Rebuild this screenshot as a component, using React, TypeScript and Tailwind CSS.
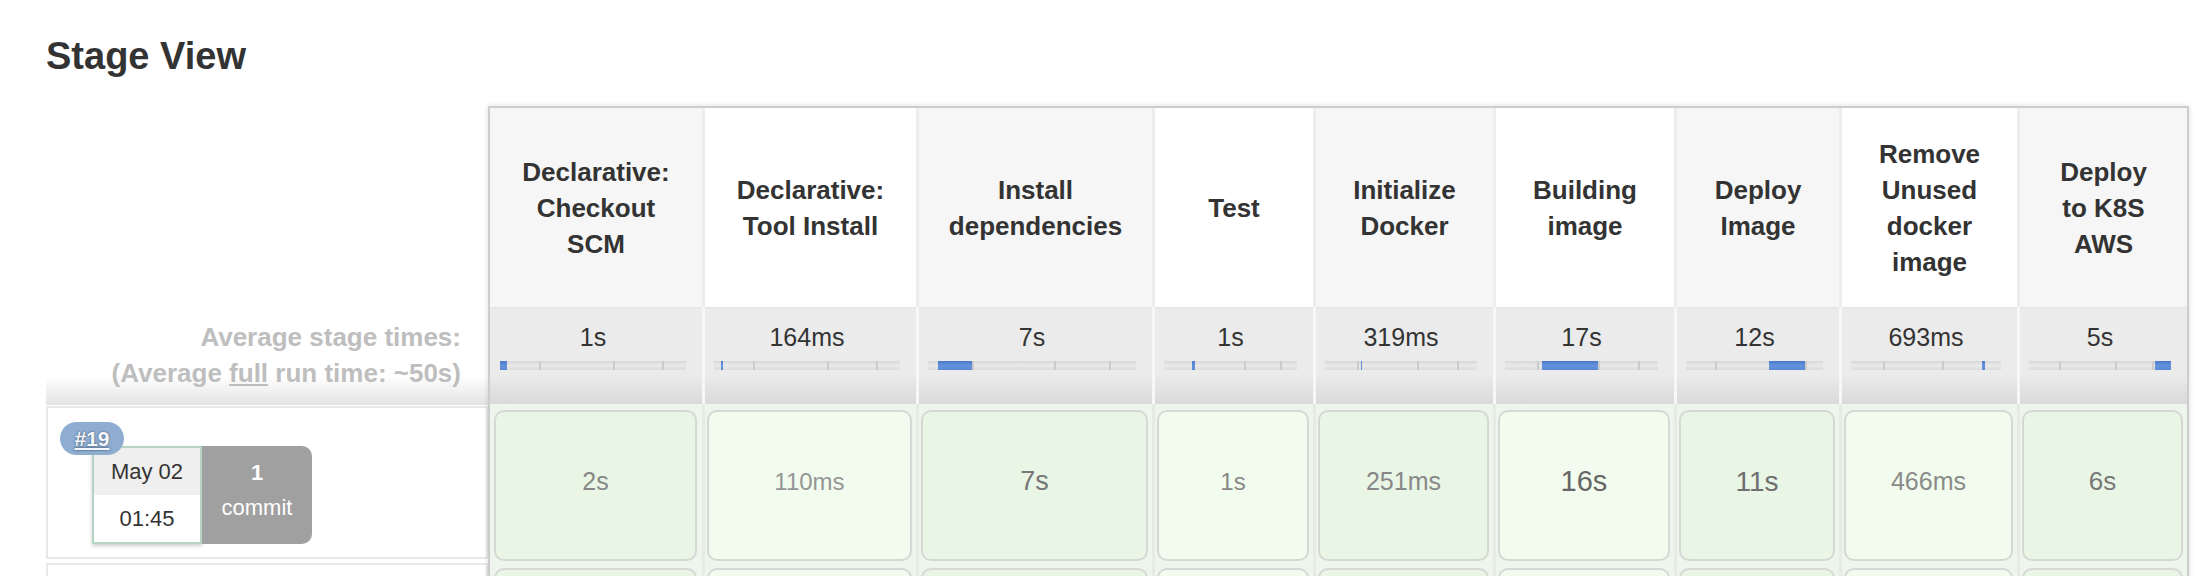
import React from "react";

type Stage = {
  name: string[];
  avg: string;
  run: string;
  size: string;
  color: string;
  width: string;
};

const stages: Stage[] = [
  { name: ["Declarative:", "Checkout", "SCM"], avg: "1s", run: "2s", size: "text-[25px]", color: "text-[#888]", width: "w-[212px]" },
  { name: ["Declarative:", "Tool Install"], avg: "164ms", run: "110ms", size: "text-[24px]", color: "text-[#959595]", width: "w-[214px]" },
  { name: ["Install", "dependencies"], avg: "7s", run: "7s", size: "text-[27px]", color: "text-[#777]", width: "w-[236px]" },
  { name: ["Test"], avg: "1s", run: "1s", size: "text-[24px]", color: "text-[#888]", width: "w-[161px]" },
  { name: ["Initialize", "Docker"], avg: "319ms", run: "251ms", size: "text-[25px]", color: "text-[#888]", width: "w-[180px]" },
  { name: ["Building", "image"], avg: "17s", run: "16s", size: "text-[29px]", color: "text-[#666]", width: "w-[181px]" },
  { name: ["Deploy", "Image"], avg: "12s", run: "11s", size: "text-[28px]", color: "text-[#6f6f6f]", width: "w-[165px]" },
  { name: ["Remove", "Unused", "docker", "image"], avg: "693ms", run: "466ms", size: "text-[25px]", color: "text-[#8a8a8a]", width: "w-[178px]" },
  { name: ["Deploy", "to K8S", "AWS"], avg: "5s", run: "6s", size: "text-[26px]", color: "text-[#777]", width: "w-[170px]" },
];

// share of the full run each stage takes, in percent
const segments = [4, 1, 16, 2.5, 1, 36, 26.5, 2, 11];
const ticks = [3, 6, 7];

const TimeBar = ({ active }: { active: number }) => (
  <div className="flex h-[9px] w-full bg-[#e2e2e2]">
    {segments.map((w, i) => (
      <div
        key={i}
        style={{ width: `${w}%` }}
        className={
          i === active
            ? "h-full bg-[linear-gradient(to_bottom,#4b79c9,#6592dc_50%,#5a88d4)]"
            : ticks.includes(i)
            ? "h-full border-l-2 border-[#cccccc] bg-[linear-gradient(to_bottom,#d8d8d8,#e9e9e9_50%,#dcdcdc)]"
            : "h-full bg-[linear-gradient(to_bottom,#d8d8d8,#e9e9e9_50%,#dcdcdc)]"
        }
      />
    ))}
  </div>
);

const StageColumn = ({ stage, index }: { stage: Stage; index: number }) => {
  const odd = index % 2 === 0;
  const first = index === 0;
  return (
    <div className={`${stage.width} flex flex-col shrink-0`}>
      <div
        className={`h-[199px] flex items-center justify-center text-center text-[26px] leading-[36px] font-bold text-[#333] whitespace-nowrap ${
          odd ? "bg-[#f6f6f6]" : "bg-white"
        } ${first ? "" : "border-l-[3px] border-[#ededed]"}`}
      >
        <div>
          {stage.name.map((l) => (
            <div key={l}>{l}</div>
          ))}
        </div>
      </div>
      <div
        className={`h-[97px] flex flex-col pt-[13px] bg-[linear-gradient(to_bottom,#e3e3e3_0px,#ebebeb_2px,#ebebeb_70%,#d9d9d9_100%)] ${
          first ? "pl-[10px] pr-[16px]" : "border-l-[3px] border-[#f7f7f7] pl-[9px] pr-[16px]"
        }`}
      >
        <div className="text-center text-[25px] leading-[34px] text-[#333]">{stage.avg}</div>
        <div className="mt-[7px]">
          <TimeBar active={index} />
        </div>
      </div>
      <div
        className={`h-[159px] pt-[6px] pb-[2px] bg-[#eef5ec] ${
          first ? "pl-[4px] pr-[5px]" : "border-l-[3px] border-[#e6ebe4] pl-[2px] pr-[4px]"
        }`}
      >
        <div
          className={`h-[151px] rounded-[10px] border-2 border-[#d5d9d3] flex items-center justify-center pb-[8px] ${
            odd ? "bg-[#e9f5e5]" : "bg-[#f1fcee]"
          } ${stage.size} ${stage.color}`}
        >
          {stage.run}
        </div>
      </div>
      <div
        className={`h-[120px] pt-[5px] bg-[#eef5ec] ${
          first ? "pl-[4px] pr-[5px]" : "border-l-[3px] border-[#e6ebe4] pl-[2px] pr-[4px]"
        }`}
      >
        <div
          className={`h-[151px] rounded-[10px] border-2 border-[#d5d9d3] ${
            odd ? "bg-[#e9f5e5]" : "bg-[#f1fcee]"
          }`}
        />
      </div>
    </div>
  );
};

const BuildInfo = () => (
  <div className="h-[153px] border-2 border-[#e8e8e8] pt-[14px] pl-[12px]">
    <div className="relative z-10 w-[64px] h-[33px] rounded-full bg-[#8eadd0] flex items-center justify-center text-[21px] font-bold text-[#f4f7fb] underline [text-shadow:0_0_2px_#2c3e55]">
      #19
    </div>
    <div className="flex ml-[32px] -mt-[9px]">
      <div className="w-[110px] h-[98px] border-2 border-[#b6d4c4] flex flex-col shadow-[0_2px_4px_rgba(0,0,0,0.2)] text-[22px] text-[#333]">
        <div className="h-[47px] bg-[#efefef] flex items-center justify-center">May 02</div>
        <div className="flex-1 bg-white flex items-center justify-center">01:45</div>
      </div>
      <div className="w-[110px] h-[98px] bg-[#a0a0a0] rounded-r-[10px] flex flex-col items-center justify-center pb-[10px] text-[22px] leading-[35px] text-white">
        <div className="font-bold">1</div>
        <div>commit</div>
      </div>
    </div>
  </div>
);

export default function App() {
  return (
    <div className="w-full h-[576px] overflow-hidden bg-white font-['Liberation_Sans',Arial,sans-serif] pl-[46px] pt-[34px]">
      <h2 className="text-[38px] leading-[44px] font-bold text-[#333]">Stage View</h2>
      <div className="flex mt-[28px]">
        <div className="w-[442px] shrink-0 flex flex-col">
          <div className="h-[202px]" />
          <div className="h-[97px] pt-[11px] pr-[27px] text-right text-[26px] leading-[36px] font-bold text-[#bebebe] bg-[linear-gradient(to_bottom,#ffffff_0%,#ffffff_70%,#e3e3e3_100%)]">
            <div>Average stage times:</div>
            <div>
              (Average <span className="underline">full</span> run time: ~50s)
            </div>
          </div>
          <div className="h-[1px]" />
          <BuildInfo />
          <div className="h-[4px]" />
          <div className="h-[120px] border-2 border-[#e8e8e8]" />
        </div>
        <div className="flex shrink-0 border-2 border-b-0 border-[#cdcdcd] shadow-[0_0_5px_rgba(0,0,0,0.15)]">
          {stages.map((s, i) => (
            <StageColumn key={i} stage={s} index={i} />
          ))}
        </div>
      </div>
    </div>
  );
}
